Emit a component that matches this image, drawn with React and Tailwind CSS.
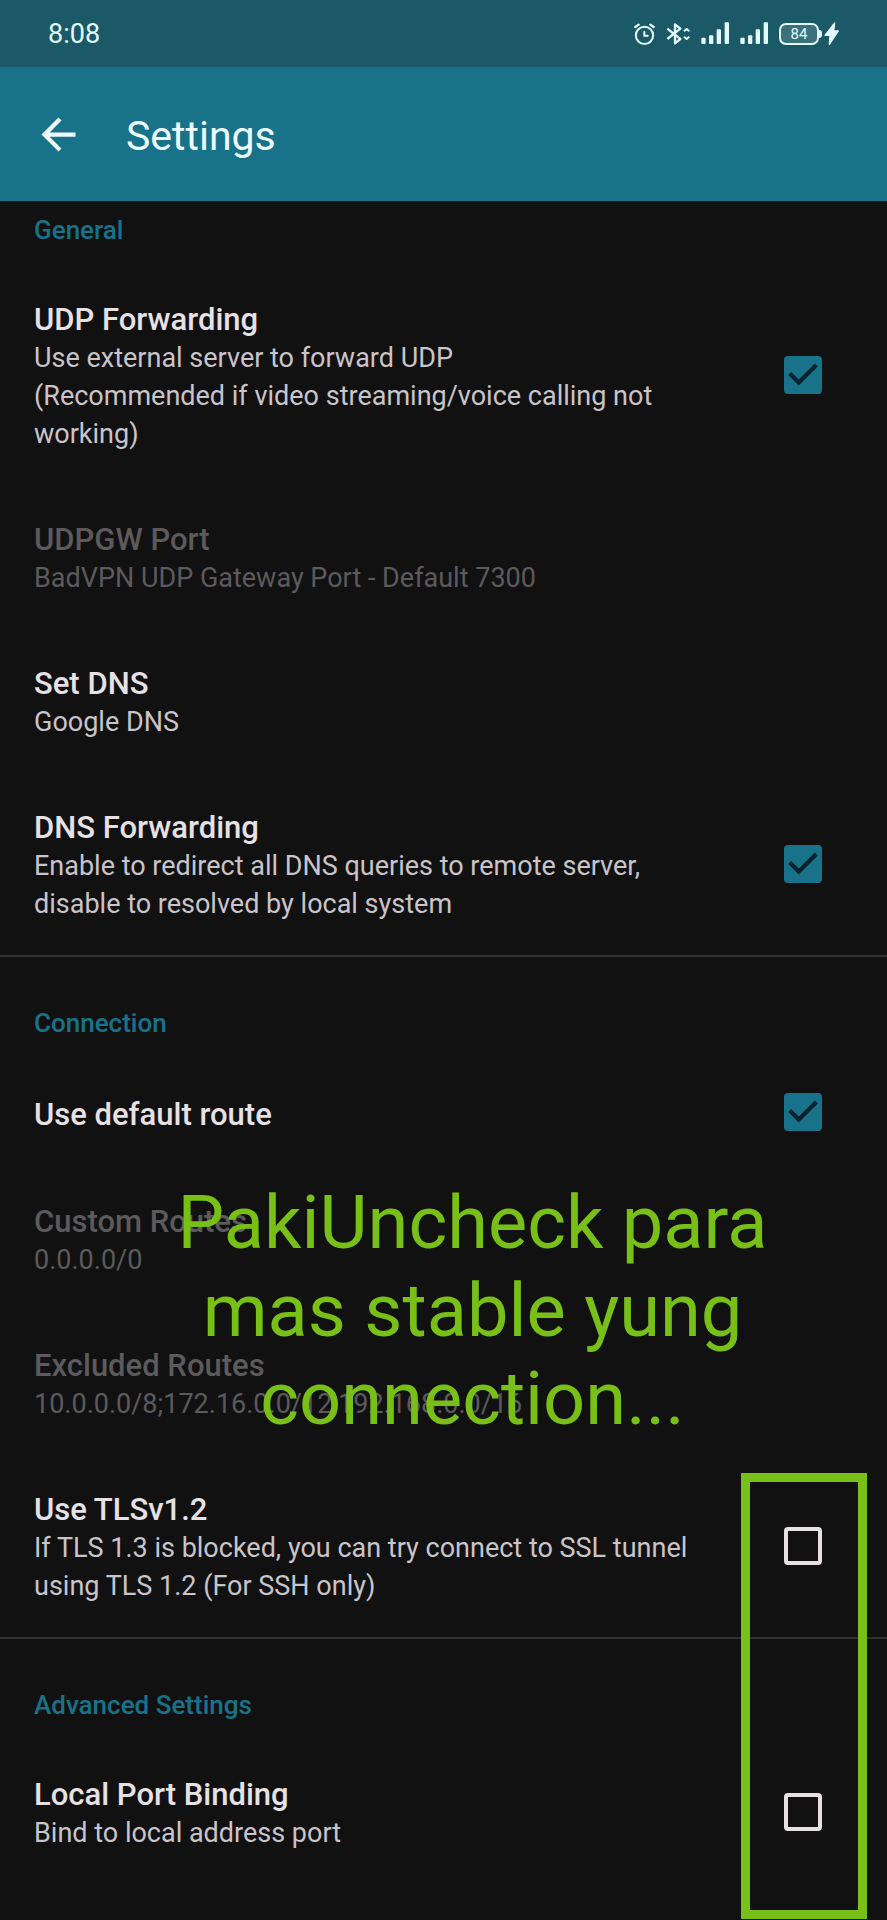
// App.jsx
// SETTINGS SCREEN: status bar, app bar, the preference list and the green
// annotation (note + frame) drawn over it.

import { useId } from 'react';

const sections = [
  {
    title: 'General',
    items: [
      {
        title: 'UDP Forwarding',
        summary: 'Use external server to forward UDP\n(Recommended if video streaming/voice calling not working)',
        checkbox: true,
        checked: true,
      },
      { title: 'UDPGW Port', summary: 'BadVPN UDP Gateway Port - Default 7300', disabled: true },
      { title: 'Set DNS', summary: 'Google DNS' },
      {
        title: 'DNS Forwarding',
        summary: 'Enable to redirect all DNS queries to remote server, disable to resolved by local system',
        checkbox: true,
        checked: true,
      },
    ],
  },
  {
    title: 'Connection',
    items: [
      { title: 'Use default route', checkbox: true, checked: true },
      { title: 'Custom Routes', summary: '0.0.0.0/0', disabled: true },
      { title: 'Excluded Routes', summary: '10.0.0.0/8;172.16.0.0/12;192.168.0.0/16', disabled: true },
      {
        title: 'Use TLSv1.2',
        summary: 'If TLS 1.3 is blocked, you can try connect to SSL tunnel using TLS 1.2 (For SSH only)',
        checkbox: true,
      },
    ],
  },
  {
    title: 'Advanced Settings',
    items: [
      { title: 'Local Port Binding', summary: 'Bind to local address port', checkbox: true },
    ],
  },
];

/* ---- Status bar icons ---- */

function AlarmIcon() {
  return (
    <svg viewBox="101 66 63 72" className="w-[21px] h-6" fill="none" stroke="currentColor" strokeWidth="6" strokeLinecap="round">
      <circle cx="132.5" cy="106" r="26" />
      <path d="M105 81 L115 74 M160 81 L150 74" strokeWidth="7" />
      <path d="M132 95 V107 H142" />
    </svg>
  );
}

function BluetoothIcon() {
  return (
    <svg viewBox="198 66 72 72" className="w-6 h-6" fill="none" stroke="currentColor" strokeWidth="7" strokeLinejoin="round">
      <path d="M202 86 L241 117 L225 130 V73 L241 86 L202 117" />
      <path d="M252 94 L260 87 L268 94 M252 110 L260 117 L268 110" strokeWidth="6" />
    </svg>
  );
}

function SignalIcon() {
  return (
    <svg viewBox="303 66 84 72" className="w-7 h-6" fill="currentColor">
      <rect x="304" y="113" width="13" height="19" rx="3" />
      <rect x="327" y="106" width="13" height="26" rx="3" />
      <rect x="350" y="88" width="13" height="44" rx="3" />
      <rect x="374" y="67" width="13" height="65" rx="3" />
    </svg>
  );
}

function BoltIcon() {
  return (
    <svg viewBox="672 66 45 72" className="w-[15px] h-6" fill="currentColor" stroke="currentColor" strokeWidth="4" strokeLinejoin="round">
      <path d="M704 69 L675 106 H690 L688 133 L715 93 H701 Z" />
    </svg>
  );
}

function StatusBar() {
  return (
    <div className="h-[67px] px-12 flex items-center justify-between bg-[#1b5966] text-[#e3fbff]">
      <span className="text-[27px] leading-8">8:08</span>
      <div className="flex items-center gap-[11px]">
        <AlarmIcon />
        <BluetoothIcon />
        <SignalIcon />
        <SignalIcon />
        <div className="flex items-center">
          <span className="w-10 h-[22px] rounded-[7px] border-2 border-current bg-white/15 flex items-center justify-center text-[15px] leading-4">
            84
          </span>
          <span className="w-[3px] h-2 mr-[2px] rounded-r-sm bg-current" />
          <BoltIcon />
        </div>
      </div>
    </div>
  );
}

function AppBar() {
  return (
    <header className="h-[134px] px-[33px] flex items-center gap-[42px] bg-[#17728a] text-[#eefcff]">
      <button type="button" aria-label="Back">
        <svg viewBox="0 0 24 24" className="w-[51px] h-[51px]" fill="currentColor">
          <path d="M20 11H7.83l5.59-5.59L12 4l-8 8 8 8 1.41-1.41L7.83 13H20v-2z" />
        </svg>
      </button>
      <h1 className="pt-1 text-[41px] leading-[50px]">Settings</h1>
    </header>
  );
}

/* ---- Preference rows ---- */

function CheckBox({ id, checked }) {
  return (
    <span className="grid shrink-0 mb-1">
      <input
        id={id}
        type="checkbox"
        defaultChecked={checked}
        className="peer col-start-1 row-start-1 appearance-none w-[38px] h-[38px] rounded border-4 border-[#e6e1e5]
                   checked:border-[#17728a] checked:bg-[#17728a]"
      />
      <svg
        viewBox="3 3 18 18"
        className="col-start-1 row-start-1 w-[38px] h-[38px] text-[#06222b] opacity-0 peer-checked:opacity-100 pointer-events-none"
        fill="currentColor"
      >
        <path d="M10 17l-5-5 1.41-1.41L10 14.17l7.59-7.59L19 8l-9 9z" />
      </svg>
    </span>
  );
}

function RowText({ title, summary }) {
  return (
    <span className="flex-1 flex flex-col">
      <span className="text-[31px] leading-[39px] font-medium text-[#e6e1e5] group-disabled:text-[#5c5a5c]">
        {title}
      </span>
      {summary && (
        <span className="text-[27px] leading-[38px] whitespace-pre-line text-[#c9c4c9] group-disabled:text-[#5c5a5c]">
          {summary}
        </span>
      )}
    </span>
  );
}

function Row({ item }) {
  const id = useId();

  if (item.checkbox) {
    return (
      <label htmlFor={id} className="min-h-[108px] flex items-center gap-16 pl-[34px] pr-[65px] pt-[35px] pb-8">
        <RowText title={item.title} summary={item.summary} />
        <CheckBox id={id} checked={item.checked} />
      </label>
    );
  }

  return (
    <button type="button" disabled={item.disabled} className="group w-full flex text-left px-[34px] pt-[35px] pb-8">
      <RowText title={item.title} summary={item.summary} />
    </button>
  );
}

function Section({ section }) {
  return (
    <section className="border-t-2 border-[#303030] first:border-t-0">
      <h2 className="px-[34px] pt-[50px] pb-[19px] text-[26px] leading-8 font-medium text-[#17728a]">
        {section.title}
      </h2>
      {section.items.map((item) => (
        <Row key={item.title} item={item} />
      ))}
    </section>
  );
}

export default function App() {
  return (
    <div className="min-h-screen flex flex-col bg-[#111111] font-['Roboto',sans-serif]">
      <StatusBar />
      <AppBar />

      <main className="relative flex-1 pb-8 [&>section:first-child>h2]:pt-[13px]">
        {sections.map((section) => (
          <Section key={section.title} section={section} />
        ))}

        {/* ---- Note written over the list ---- */}
        <p className="absolute top-[978px] inset-x-0 pl-[58px] text-center text-[74px] leading-[88px] text-[#78c017] pointer-events-none">
          PakiUncheck para
          <br />
          mas stable yung
          <br />
          connection...
        </p>

        {/* ---- Frame round the two boxes to leave unticked ---- */}
        <div className="absolute top-[1272px] bottom-px right-5 w-[126px] border-9 border-[#78c017] pointer-events-none" />
      </main>
    </div>
  );
}
